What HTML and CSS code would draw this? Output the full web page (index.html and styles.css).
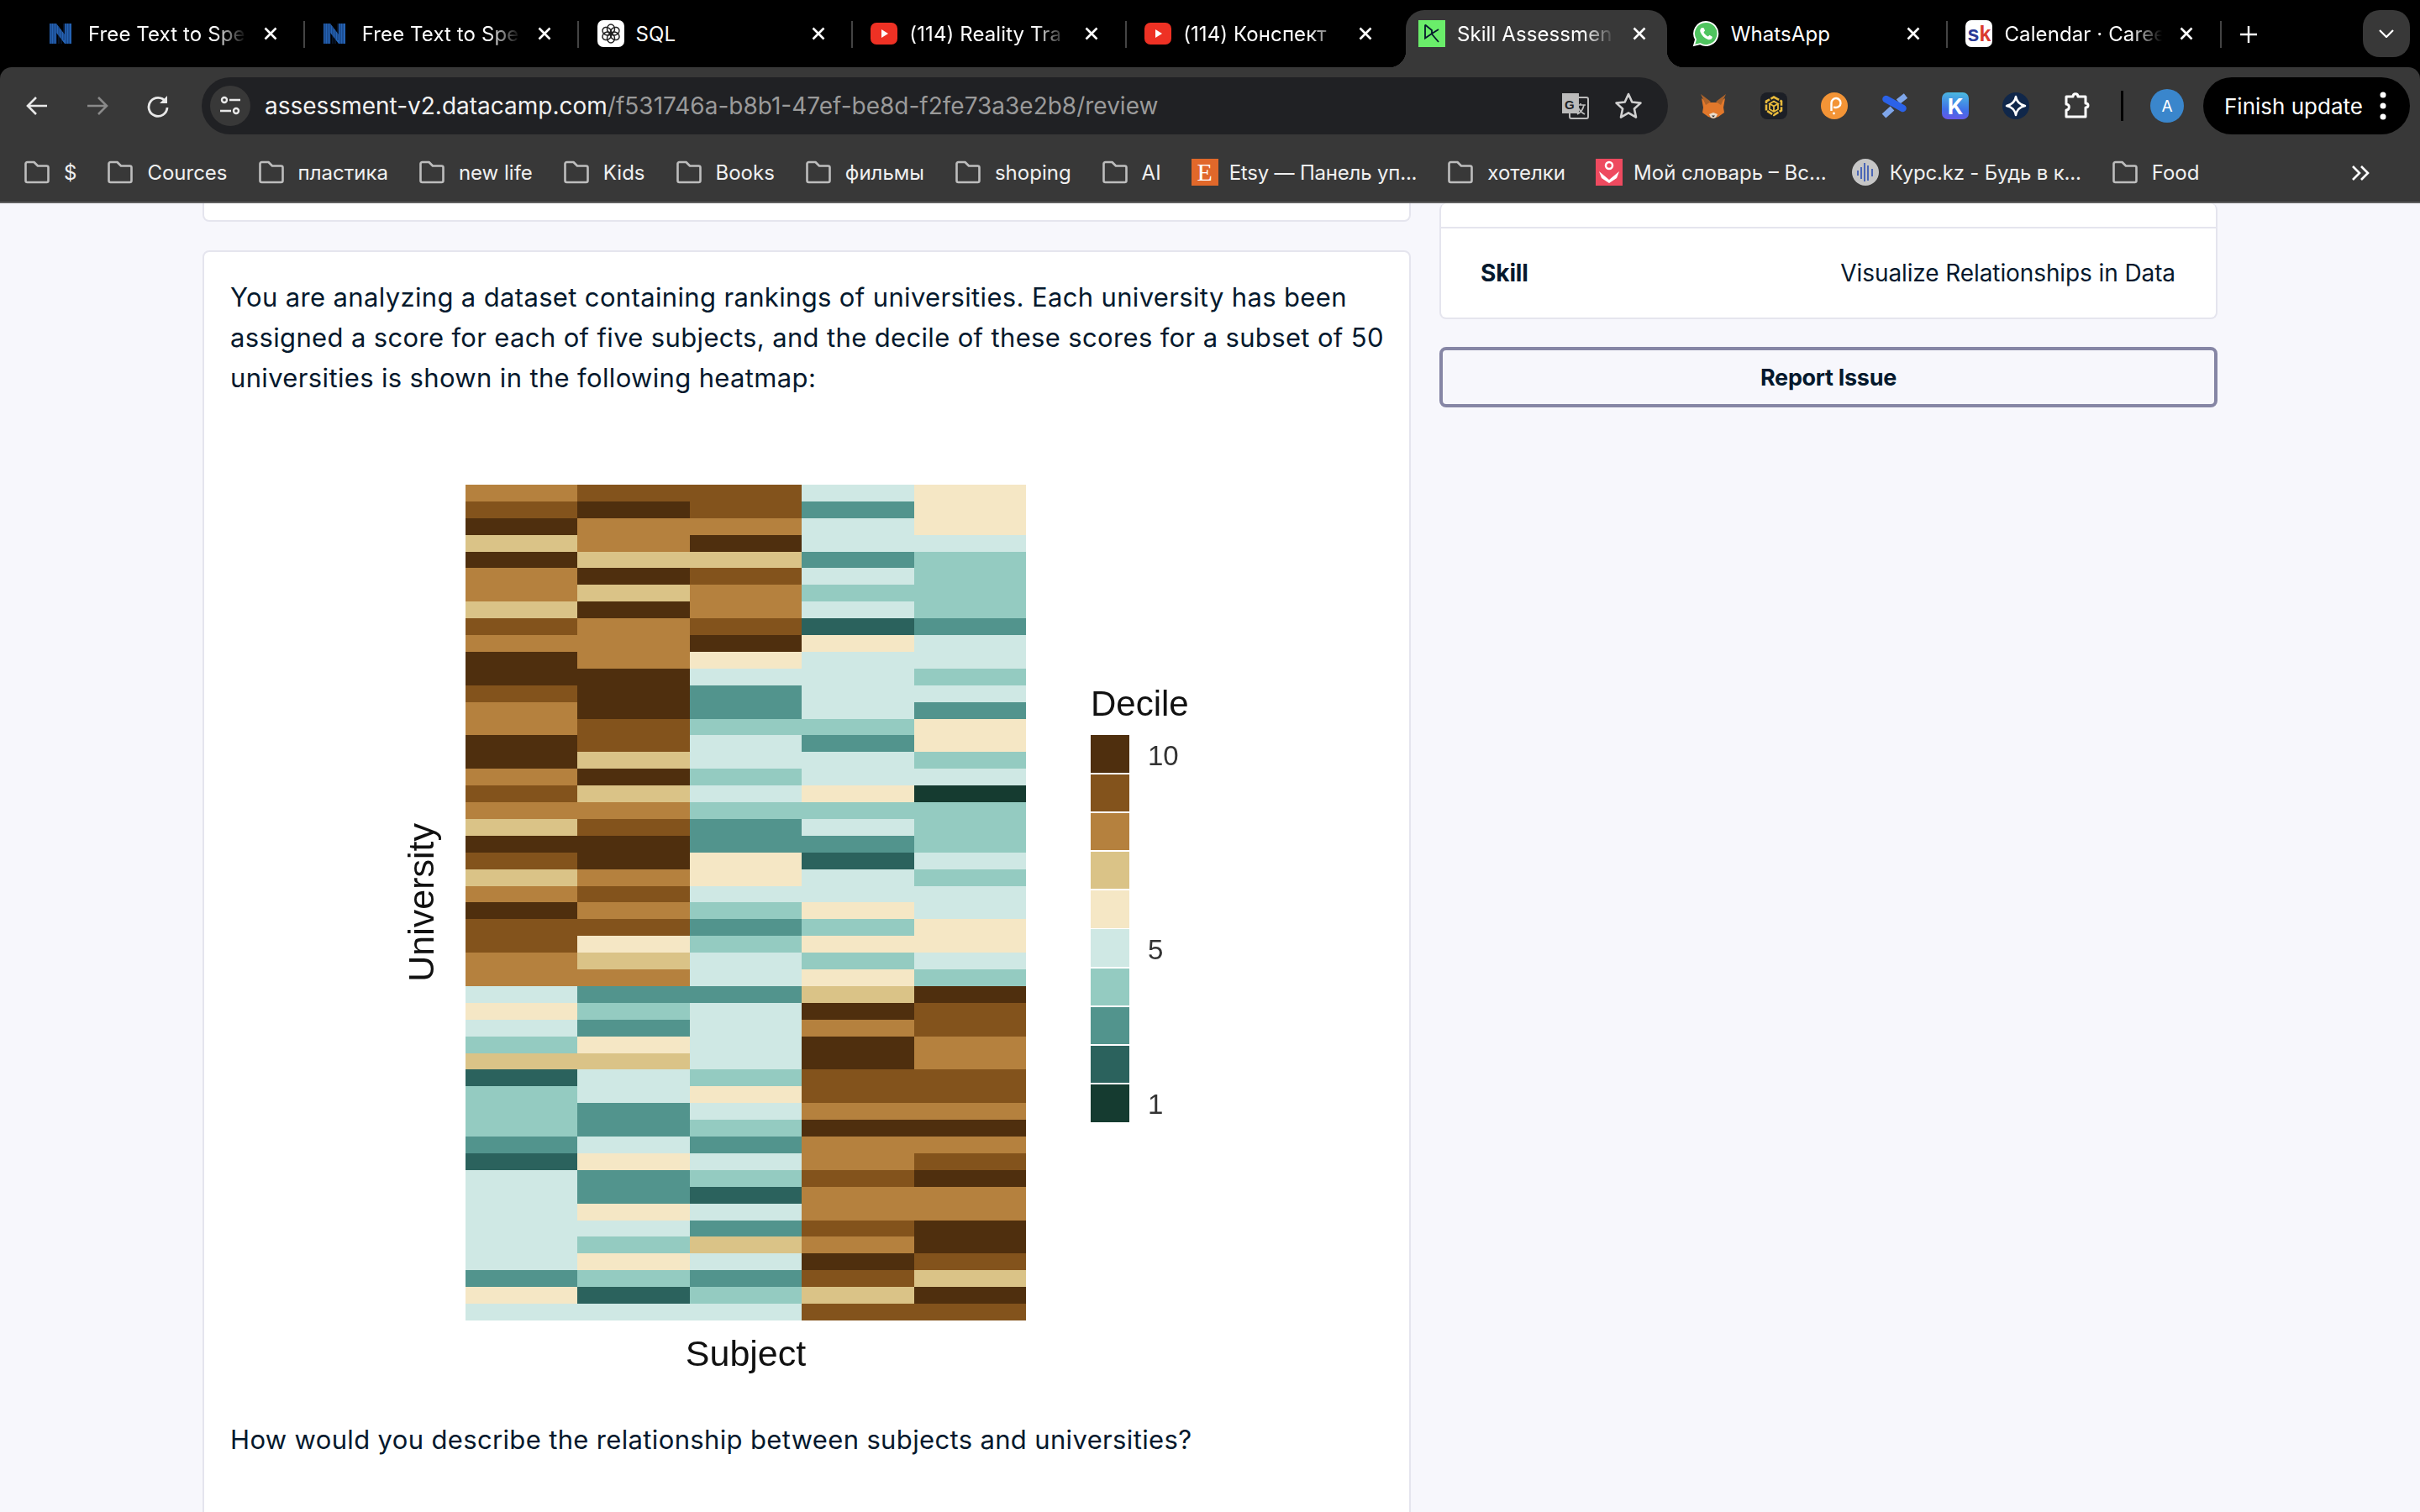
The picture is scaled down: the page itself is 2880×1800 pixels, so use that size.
FILE: index.html
```html
<!DOCTYPE html>
<html lang="en">

<head>
  <meta charset="UTF-8">
  <meta name="viewport" content="width=device-width, initial-scale=1.0">
  <title>Skill Assessment</title>
  <link rel="stylesheet" href="styles.css">
</head>

<body>
  <svg class="defs" width="0" height="0">
    <symbol id="folder" viewBox="0 0 32 28"><path d="M2.5 4a2 2 0 0 1 2-2h8l4.500 4.500h10.500a2 2 0 0 1 2 2v15.500a2 2 0 0 1-2 2h-23a2 2 0 0 1-2-2z" fill="none" stroke="#bdbdbd" stroke-width="2.600" stroke-linejoin="round"/></symbol>
    <symbol id="notion" viewBox="0 0 26 32"><path d="M0 4h8l10 13V4h8v24h-8L8 15v13H0z" fill="#2563b4"/><path d="M2 4v24M5 4v24M8 4v24M11 8v20M14 12v16M17 4v20M20 4v24M23 4v24" stroke="#0f2f5f" stroke-width="0.800"/></symbol>
    <symbol id="youtube" viewBox="0 0 32 32"><rect y="3" width="32" height="26" rx="7" fill="#ee3124"/><path d="M13 11l8 5-8 5z" fill="#fff"/></symbol>
    <symbol id="close" viewBox="0 0 16 16"><path d="M1.500 1.500l13 13M14.500 1.500l-13 13" stroke="#fff" stroke-width="2.600"/></symbol>
  </svg>

  <div class="chrome">
  <div class="tabstrip">
    <div class="tab">
      <svg class="favicon notion"><use href="#notion"/></svg>
      <span class="tab-title">Free Text to Spe</span><svg class="tab-close"><use href="#close"/></svg>
    </div>
    <span class="tab-sep"></span>
    <div class="tab">
      <svg class="favicon notion"><use href="#notion"/></svg>
      <span class="tab-title">Free Text to Spe</span><svg class="tab-close"><use href="#close"/></svg>
    </div>
    <span class="tab-sep"></span>
    <div class="tab">
      <svg class="favicon" viewBox="0 0 32 32"><rect width="32" height="32" rx="7" fill="#fff"/><g fill="none" stroke="#222" stroke-width="1.500"><ellipse cx="16" cy="10.500" rx="4.500" ry="5.500"/><ellipse cx="16" cy="10.500" rx="4.500" ry="5.500" transform="rotate(60 16 16)"/><ellipse cx="16" cy="10.500" rx="4.500" ry="5.500" transform="rotate(120 16 16)"/><ellipse cx="16" cy="10.500" rx="4.500" ry="5.500" transform="rotate(180 16 16)"/><ellipse cx="16" cy="10.500" rx="4.500" ry="5.500" transform="rotate(240 16 16)"/><ellipse cx="16" cy="10.500" rx="4.500" ry="5.500" transform="rotate(300 16 16)"/></g></svg>
      <span class="tab-title plain">SQL</span><svg class="tab-close"><use href="#close"/></svg>
    </div>
    <span class="tab-sep"></span>
    <div class="tab">
      <svg class="favicon"><use href="#youtube"/></svg>
      <span class="tab-title">(114) Reality Tra</span><svg class="tab-close"><use href="#close"/></svg>
    </div>
    <span class="tab-sep"></span>
    <div class="tab">
      <svg class="favicon"><use href="#youtube"/></svg>
      <span class="tab-title">(114) Конспект</span><svg class="tab-close"><use href="#close"/></svg>
    </div>
    <span class="tab-sep hidden"></span>
    <div class="tab active">
      <svg class="favicon" viewBox="0 0 32 32"><rect width="32" height="32" fill="#6aed6a"/><path d="M8 5.500v16l8-5.500 8-5M8 5.500l8 6.500v4.500l8 9.500" fill="none" stroke="#05192d" stroke-width="1.800"/></svg>
      <span class="tab-title">Skill Assessmen</span><svg class="tab-close"><use href="#close"/></svg>
    </div>
    <span class="tab-sep hidden"></span>
    <div class="tab">
      <svg class="favicon" viewBox="0 0 32 32"><path d="M16 2a14 14 0 0 0-12 21L2 30l7.300-1.900A14 14 0 1 0 16 2z" fill="#4fc45f" stroke="#fff" stroke-width="1.800"/><path d="M11.500 9c-2 1-2.800 3-1.800 5.500 1.800 4 4.700 6.900 8.800 8.600 2.500.7 4.500-.2 5.300-2.300l-.3-1.300-3-1.700-1.800 1.700c-2.300-1-4.200-2.900-5.200-5.200l1.600-1.800-1.500-3.200z" fill="#fff"/></svg>
      <span class="tab-title plain">WhatsApp</span><svg class="tab-close"><use href="#close"/></svg>
    </div>
    <span class="tab-sep"></span>
    <div class="tab">
      <span class="favicon sk"><b class="sk-s">s</b><b class="sk-k">k</b></span>
      <span class="tab-title">Calendar · Caree</span><svg class="tab-close"><use href="#close"/></svg>
    </div>
    <span class="tab-sep"></span>
    <svg class="new-tab" viewBox="0 0 22 22"><path d="M11 1v20M1 11h20" stroke="#fff" stroke-width="2.400"/></svg>
    <div class="tab-search"><svg viewBox="0 0 18 10" width="18" height="10"><path d="M1 1l8 8 8-8" fill="none" stroke="#fff" stroke-width="2.200"/></svg></div>
  </div>

  <div class="toolbar">
    <div class="nav-btns">
      <svg viewBox="0 0 28 28" width="28" height="28"><path d="M26 14H4M13 4L3 14l10 10" fill="none" stroke="#e8e8e8" stroke-width="2.600"/></svg>
      <svg viewBox="0 0 28 28" width="28" height="28"><path d="M2 14h22M15 4l10 10-10 10" fill="none" stroke="#8a8a8a" stroke-width="2.600"/></svg>
      <svg viewBox="0 0 28 28" width="28" height="28"><path d="M23 9a11 11 0 1 0 2 7" fill="none" stroke="#e8e8e8" stroke-width="2.800"/><path d="M25 2v9h-9z" fill="#e8e8e8"/></svg>
    </div>
    <div class="omnibox">
      <span class="site-info"><svg viewBox="0 0 26 26" width="26" height="26"><g fill="none" stroke="#e8e8e8" stroke-width="2.400"><circle cx="6" cy="6" r="3"/><path d="M12 6h13M1 19h13"/><circle cx="20" cy="19" r="3"/></g></svg></span>
      <span class="url">assessment-v2.datacamp.com<span class="url-path">/f531746a-b8b1-47ef-be8d-f2fe73a3e2b8/review</span></span>
      <svg class="omni-icon" viewBox="0 0 34 34" width="34" height="34"><rect x="11" y="7" width="22" height="25" rx="2" fill="none" stroke="#bbb" stroke-width="2"/><path d="M2 2h20v24H2z" fill="#bbb"/><text x="5" y="21" class="translate-g">G</text><path d="M19 16h11M24 14v2M28 16c-1 5-4 9-8 11M21 19c2 4 4 6 8 8" fill="none" stroke="#bbb" stroke-width="1.700"/></svg>
      <svg class="omni-icon" viewBox="0 0 34 34" width="34" height="34"><path d="M17 3l4.300 9.500 10.200 1.100-7.600 6.900 2.100 10.100L17 25.400l-9 5.200 2.100-10.100-7.600-6.900 10.200-1.100z" fill="none" stroke="#d0d0d0" stroke-width="2.600" stroke-linejoin="round"/></svg>
    </div>
    <div class="extensions">
      <svg class="ext" viewBox="0 0 32 32"><path d="M2 7l7 5h14l7-5-2 11 1 6-7 5-6 2-6-2-7-5 1-6z" fill="#e2782b"/><path d="M1 2l12 9-6 4zM31 2L19 11l6 4z" fill="#ad632a"/><path d="M11 26l5-2 5 2-2 4-3 1-3-1z" fill="#e9dccd"/><path d="M14 27.500h4l-2 2.200z" fill="#333"/></svg>
      <svg class="ext" viewBox="0 0 32 32"><rect width="32" height="32" rx="8" fill="#1c1f26"/><g fill="none" stroke="#e9bb3c"><path d="M16 5.500l9 5v11l-9 5.500-9-5.500v-11z" stroke-width="2.600" stroke-dasharray="7 1.500"/><path d="M11 13.500l5 3 5-3-5-3zM11 14v6l5 3 5-3v-6M16 17v6" stroke-width="1.800"/></g></svg>
      <svg class="ext" viewBox="0 0 32 32"><circle cx="16" cy="16" r="16" fill="#f39436"/><path d="M12.500 22V12.500a5.500 5.500 0 1 1 5 5.500l-2.500-.2" fill="none" stroke="#fff" stroke-width="2.400"/><circle cx="15.500" cy="25" r="1.400" fill="#fff"/></svg>
      <svg class="ext" viewBox="0 0 32 32"><path d="M3 28l10-9M20 11l9-7" stroke="#7fa6ea" stroke-width="7"/><path d="M5.500 8l20 11" stroke="#2b62e8" stroke-width="8.500" stroke-linecap="round"/></svg>
      <span class="ext ext-k">K</span>
      <svg class="ext" viewBox="0 0 32 32"><circle cx="16" cy="16" r="16" fill="#10274a"/><path d="M16 5c1 6 4 9.500 11 11-7 1.500-10 5-11 11-1-6-4-9.500-11-11 7-1.500 10-5 11-11z" fill="none" stroke="#fff" stroke-width="2.500" stroke-linejoin="round"/></svg>
      <svg class="ext" viewBox="0 0 32 32"><path d="M4 5h8c0-4.500 6-4.500 6 0h9v8c4 0 4 5 0 5v11H4v-8c4.500 0 4.500-7 0-7z" fill="none" stroke="#fff" stroke-width="3" stroke-linejoin="round"/></svg>
      <span class="toolbar-sep"></span>
      <span class="avatar">A</span>
    </div>
    <div class="finish-update">
      <span>Finish update</span>
      <svg viewBox="0 0 8 34" width="8" height="34"><circle cx="4" cy="4" r="3.500" fill="#fff"/><circle cx="4" cy="17" r="3.500" fill="#fff"/><circle cx="4" cy="30" r="3.500" fill="#fff"/></svg>
    </div>
  </div>

  <div class="bookmarks">
    <a class="bm"><svg class="bm-icon"><use href="#folder"/></svg>$</a>
    <a class="bm"><svg class="bm-icon"><use href="#folder"/></svg>Cources</a>
    <a class="bm"><svg class="bm-icon"><use href="#folder"/></svg>пластика</a>
    <a class="bm"><svg class="bm-icon"><use href="#folder"/></svg>new life</a>
    <a class="bm"><svg class="bm-icon"><use href="#folder"/></svg>Kids</a>
    <a class="bm"><svg class="bm-icon"><use href="#folder"/></svg>Books</a>
    <a class="bm"><svg class="bm-icon"><use href="#folder"/></svg>фильмы</a>
    <a class="bm"><svg class="bm-icon"><use href="#folder"/></svg>shoping</a>
    <a class="bm"><svg class="bm-icon"><use href="#folder"/></svg>AI</a>
    <a class="bm bm-site tight"><span class="bm-icon etsy">E</span>Etsy — Панель уп...</a>
    <a class="bm"><svg class="bm-icon"><use href="#folder"/></svg>хотелки</a>
    <a class="bm bm-site"><svg class="bm-icon" viewBox="0 0 32 32"><rect width="32" height="32" fill="#ee4a5f"/><circle cx="16" cy="8" r="4" fill="none" stroke="#fff" stroke-width="2.500"/><path d="M4 15l12 10 12-10-3 8-9 6-9-6z" fill="#fff"/></svg>Мой словарь – Вс...</a>
    <a class="bm bm-site tight pull"><svg class="bm-icon" viewBox="0 0 32 32"><circle cx="16" cy="16" r="16" fill="#c6c6c6"/><path d="M7 14v6M11 10v14M15 5v22M19 8v18M24 12v9" stroke="#3f5db5" stroke-width="1.800"/></svg>Курс.kz - Будь в к...</a>
    <a class="bm"><svg class="bm-icon"><use href="#folder"/></svg>Food</a>
    <svg class="bm-more" viewBox="0 0 22 20" width="22" height="20"><path d="M2 2l8 8-8 8M12 2l8 8-8 8" fill="none" stroke="#fff" stroke-width="2.600"/></svg>
  </div>
  </div>

  <main class="page">
    <section class="left-col">
      <div class="card card-stub"></div>
      <div class="card question">
        <p>You are analyzing a dataset containing rankings of universities. Each university has been assigned a score for each of five subjects, and the decile of these scores for a subset of 50 universities is shown in the following heatmap:</p>
        <div class="chart">
          <div class="y-label">University</div>
          <div class="heatmap">
            <i class="d8"></i><i class="d9"></i><i class="d9"></i><i class="d5"></i><i class="d6"></i>
            <i class="d9"></i><i class="d10"></i><i class="d9"></i><i class="d3"></i><i class="d6"></i>
            <i class="d10"></i><i class="d8"></i><i class="d8"></i><i class="d5"></i><i class="d6"></i>
            <i class="d7"></i><i class="d8"></i><i class="d10"></i><i class="d5"></i><i class="d5"></i>
            <i class="d10"></i><i class="d7"></i><i class="d7"></i><i class="d3"></i><i class="d4"></i>
            <i class="d8"></i><i class="d10"></i><i class="d9"></i><i class="d5"></i><i class="d4"></i>
            <i class="d8"></i><i class="d7"></i><i class="d8"></i><i class="d4"></i><i class="d4"></i>
            <i class="d7"></i><i class="d10"></i><i class="d8"></i><i class="d5"></i><i class="d4"></i>
            <i class="d9"></i><i class="d8"></i><i class="d9"></i><i class="d2"></i><i class="d3"></i>
            <i class="d8"></i><i class="d8"></i><i class="d10"></i><i class="d6"></i><i class="d5"></i>
            <i class="d10"></i><i class="d8"></i><i class="d6"></i><i class="d5"></i><i class="d5"></i>
            <i class="d10"></i><i class="d10"></i><i class="d5"></i><i class="d5"></i><i class="d4"></i>
            <i class="d9"></i><i class="d10"></i><i class="d3"></i><i class="d5"></i><i class="d5"></i>
            <i class="d8"></i><i class="d10"></i><i class="d3"></i><i class="d5"></i><i class="d3"></i>
            <i class="d8"></i><i class="d9"></i><i class="d4"></i><i class="d4"></i><i class="d6"></i>
            <i class="d10"></i><i class="d9"></i><i class="d5"></i><i class="d3"></i><i class="d6"></i>
            <i class="d10"></i><i class="d7"></i><i class="d5"></i><i class="d5"></i><i class="d4"></i>
            <i class="d8"></i><i class="d10"></i><i class="d4"></i><i class="d5"></i><i class="d5"></i>
            <i class="d9"></i><i class="d7"></i><i class="d5"></i><i class="d6"></i><i class="d1"></i>
            <i class="d8"></i><i class="d8"></i><i class="d4"></i><i class="d4"></i><i class="d4"></i>
            <i class="d7"></i><i class="d9"></i><i class="d3"></i><i class="d5"></i><i class="d4"></i>
            <i class="d10"></i><i class="d10"></i><i class="d3"></i><i class="d3"></i><i class="d4"></i>
            <i class="d9"></i><i class="d10"></i><i class="d6"></i><i class="d2"></i><i class="d5"></i>
            <i class="d7"></i><i class="d8"></i><i class="d6"></i><i class="d5"></i><i class="d4"></i>
            <i class="d8"></i><i class="d9"></i><i class="d5"></i><i class="d5"></i><i class="d5"></i>
            <i class="d10"></i><i class="d8"></i><i class="d4"></i><i class="d6"></i><i class="d5"></i>
            <i class="d9"></i><i class="d9"></i><i class="d3"></i><i class="d4"></i><i class="d6"></i>
            <i class="d9"></i><i class="d6"></i><i class="d4"></i><i class="d6"></i><i class="d6"></i>
            <i class="d8"></i><i class="d7"></i><i class="d5"></i><i class="d4"></i><i class="d5"></i>
            <i class="d8"></i><i class="d8"></i><i class="d5"></i><i class="d6"></i><i class="d4"></i>
            <i class="d5"></i><i class="d3"></i><i class="d3"></i><i class="d7"></i><i class="d10"></i>
            <i class="d6"></i><i class="d4"></i><i class="d5"></i><i class="d10"></i><i class="d9"></i>
            <i class="d5"></i><i class="d3"></i><i class="d5"></i><i class="d8"></i><i class="d9"></i>
            <i class="d4"></i><i class="d6"></i><i class="d5"></i><i class="d10"></i><i class="d8"></i>
            <i class="d7"></i><i class="d7"></i><i class="d5"></i><i class="d10"></i><i class="d8"></i>
            <i class="d2"></i><i class="d5"></i><i class="d4"></i><i class="d9"></i><i class="d9"></i>
            <i class="d4"></i><i class="d5"></i><i class="d6"></i><i class="d9"></i><i class="d9"></i>
            <i class="d4"></i><i class="d3"></i><i class="d5"></i><i class="d8"></i><i class="d8"></i>
            <i class="d4"></i><i class="d3"></i><i class="d4"></i><i class="d10"></i><i class="d10"></i>
            <i class="d3"></i><i class="d5"></i><i class="d3"></i><i class="d8"></i><i class="d8"></i>
            <i class="d2"></i><i class="d6"></i><i class="d5"></i><i class="d8"></i><i class="d9"></i>
            <i class="d5"></i><i class="d3"></i><i class="d4"></i><i class="d9"></i><i class="d10"></i>
            <i class="d5"></i><i class="d3"></i><i class="d2"></i><i class="d8"></i><i class="d8"></i>
            <i class="d5"></i><i class="d6"></i><i class="d5"></i><i class="d8"></i><i class="d8"></i>
            <i class="d5"></i><i class="d5"></i><i class="d3"></i><i class="d9"></i><i class="d10"></i>
            <i class="d5"></i><i class="d4"></i><i class="d7"></i><i class="d8"></i><i class="d10"></i>
            <i class="d5"></i><i class="d6"></i><i class="d5"></i><i class="d10"></i><i class="d9"></i>
            <i class="d3"></i><i class="d4"></i><i class="d3"></i><i class="d9"></i><i class="d7"></i>
            <i class="d6"></i><i class="d2"></i><i class="d4"></i><i class="d7"></i><i class="d10"></i>
            <i class="d5"></i><i class="d5"></i><i class="d5"></i><i class="d9"></i><i class="d9"></i>
          </div>
          <div class="legend">
            <div class="legend-title">Decile</div>
            <div class="legend-row"><i class="d10"></i><span>10</span></div>
            <div class="legend-row"><i class="d9"></i></div>
            <div class="legend-row"><i class="d8"></i></div>
            <div class="legend-row"><i class="d7"></i></div>
            <div class="legend-row"><i class="d6"></i></div>
            <div class="legend-row"><i class="d5"></i><span>5</span></div>
            <div class="legend-row"><i class="d4"></i></div>
            <div class="legend-row"><i class="d3"></i></div>
            <div class="legend-row"><i class="d2"></i></div>
            <div class="legend-row"><i class="d1"></i><span>1</span></div>
          </div>
          <div class="x-label">Subject</div>
        </div>
        <p class="prompt">How would you describe the relationship between subjects and universities?</p>
      </div>
    </section>

    <aside class="right-col">
      <div class="card meta">
        <div class="meta-stub"></div>
        <div class="meta-row"><strong>Skill</strong><span>Visualize Relationships in Data</span></div>
      </div>
      <button class="report">Report Issue</button>
    </aside>
  </main>
</body>

</html>
```

FILE: styles.css
```css
* {
  box-sizing: border-box;
}

html,
body {
  margin: 0;
  height: 1800px;
  overflow: hidden;
}

body {
  font-family: 'Inter', sans-serif;
  background-color: #f7f7fc;
  color: #05192d;
}

.defs {
  position: absolute;
}

/* browser chrome */
.chrome {
  background-color: #000;
}

.tabstrip {
  display: flex;
  align-items: flex-end;
  height: 80px;
  padding-left: 44px;
}

.tab {
  position: relative;
  display: flex;
  align-items: center;
  width: 311px;
  height: 68px;
  padding: 0 15px 12px 15px;
  color: #fff;
  font-size: 24px;
  letter-spacing: 0.100px;
  border-radius: 22px 22px 0 0;
}

.tab.active {
  background-color: #383838;
}

.tab.active::before,
.tab.active::after {
  content: "";
  position: absolute;
  bottom: 0;
  width: 20px;
  height: 20px;
}

.tab.active::before {
  left: -20px;
  background: radial-gradient(circle at 0 0, transparent 20px, #383838 20.500px);
}

.tab.active::after {
  right: -20px;
  background: radial-gradient(circle at 100% 0, transparent 20px, #383838 20.500px);
}

.tab-sep {
  width: 2px;
  height: 32px;
  margin: 0 6.400px 23px 6.400px;
  background-color: #444;
}

.tab-sep.hidden {
  background-color: transparent;
}

.favicon {
  flex: none;
  width: 32px;
  height: 32px;
}

.favicon.notion {
  width: 26px;
  margin-right: 6px;
}

.sk {
  display: flex;
  align-items: center;
  justify-content: center;
  background-color: #fff;
  border-radius: 7px;
  font-family: 'Liberation Sans', sans-serif;
  font-size: 25px;
}

.sk-s {
  color: #2a3a96;
}

.sk-k {
  color: #d93a30;
}

.tab-title {
  flex: none;
  width: 192px;
  margin-left: 14px;
  overflow: hidden;
  white-space: nowrap;
  -webkit-mask-image: linear-gradient(to right, #000 78%, transparent 98%);
  mask-image: linear-gradient(to right, #000 78%, transparent 98%);
}

.tab-title.plain {
  -webkit-mask-image: none;
  mask-image: none;
}

.tab-close {
  flex: none;
  width: 16px;
  height: 16px;
  margin-left: 17px;
}

.new-tab {
  width: 22px;
  height: 22px;
  margin: 0 0 28px 15px;
}

.tab-search {
  display: flex;
  align-items: center;
  justify-content: center;
  width: 56px;
  height: 56px;
  margin: 0 0 12px 125px;
  background-color: #383838;
  border-radius: 20px;
}

.toolbar {
  display: flex;
  align-items: center;
  height: 80px;
  padding: 12px 0 0 0;
  background-color: #383838;
  border-radius: 14px 14px 0 0;
}

.nav-btns {
  flex: none;
  display: flex;
  align-items: center;
  gap: 44px;
  padding-left: 30px;
  width: 240px;
}

.omnibox {
  flex: none;
  display: flex;
  align-items: center;
  width: 1745px;
  height: 68px;
  padding: 0 30px 0 10px;
  background-color: #202124;
  border-radius: 34px;
}

.site-info {
  display: flex;
  align-items: center;
  justify-content: center;
  width: 48px;
  height: 48px;
  background-color: #383838;
  border-radius: 50%;
}

.url {
  flex: 1;
  margin-left: 17px;
  color: #f2f2f2;
  font-size: 28px;
  white-space: nowrap;
}

.url-path {
  color: #9a9a9a;
}

.translate-g {
  font-family: 'Liberation Sans', sans-serif;
  font-size: 15px;
  font-weight: 700;
  fill: #202124;
}

.omni-icon {
  margin-left: 30px;
}

.extensions {
  flex: none;
  display: flex;
  align-items: center;
  gap: 40px;
  width: 637px;
  padding-left: 38px;
}

.ext {
  flex: none;
  display: flex;
  align-items: center;
  justify-content: center;
  width: 32px;
  height: 32px;
  color: #fff;
  font-weight: 700;
  font-size: 26px;
}

.ext-k {
  background: linear-gradient(185deg, #4bbde0, #3f6fe8 65%, #6a55e8);
  border-radius: 7px;
}

.toolbar-sep {
  flex: none;
  width: 3px;
  height: 36px;
  margin-left: -3.500px;
  background-color: #000;
}

.avatar {
  flex: none;
  display: flex;
  align-items: center;
  justify-content: center;
  width: 40px;
  height: 40px;
  margin-left: -7.500px;
  color: #fff;
  font-size: 19px;
  background-color: #3a86cc;
  border-radius: 50%;
}

.finish-update {
  flex: none;
  display: flex;
  align-items: center;
  justify-content: space-between;
  width: 246px;
  height: 68px;
  padding: 0 28px 0 25px;
  color: #fff;
  font-size: 26px;
  background-color: #000;
  border-radius: 34px;
}

.bookmarks {
  position: relative;
  display: flex;
  align-items: center;
  height: 82px;
  padding: 10px 0 0 28px;
  gap: 36px;
  background-color: #383838;
  border-bottom: 2px solid #5e5e5e;
  color: #f0f0f0;
  font-size: 24px;
}

.bm {
  display: flex;
  align-items: center;
  gap: 16px;
  white-space: nowrap;
}

.bm-site {
  gap: 13px;
}

.bm-site.tight {
  letter-spacing: -0.200px;
}

.bm-site.pull {
  margin-left: -6px;
}

.bm-icon {
  flex: none;
  width: 32px;
  height: 32px;
}

.etsy {
  display: flex;
  align-items: center;
  justify-content: center;
  color: #fff;
  font-family: 'Liberation Serif', serif;
  font-size: 30px;
  background-color: #e1682a;
}

.bm-more {
  position: absolute;
  top: 36px;
  left: 2798px;
}

/* page */
.page {
  display: grid;
  grid-template-columns: 1438px 926px;
  column-gap: 34px;
  align-items: start;
  padding-left: 241px;
}

.card {
  background-color: #fff;
  border: 2px solid #e5e5ee;
  border-radius: 8px;
}

.card-stub {
  height: 22px;
  margin-bottom: 34px;
  border-top: 0;
  border-radius: 0 0 8px 8px;
}

.question {
  height: 1600px;
  padding: 30px 20px 30px 31px;
  color: #05192d;
  font-size: 31px;
  line-height: 48px;
  letter-spacing: 0.350px;
}

.question p {
  margin: 0;
}

.chart {
  display: grid;
  grid-template-columns: 48px 667px auto;
  column-gap: 29px;
  align-items: center;
  margin: 103px 0 0 203px;
  color: #111;
  font-family: 'Liberation Sans', sans-serif;
  font-size: 43px;
  line-height: 1;
  letter-spacing: 0;
  filter: blur(0.4px);
}

.y-label {
  justify-self: center;
  writing-mode: vertical-rl;
  transform: rotate(180deg);
}

.heatmap {
  display: grid;
  grid-template-columns: repeat(5, 1fr);
  grid-template-rows: repeat(50, 1fr);
  width: 667px;
  height: 995px;
}

.legend {
  margin: 4px 0 0 48px;
}

.legend-title {
  margin-bottom: 16px;
  font-size: 42px;
}

.legend-row {
  display: flex;
  align-items: center;
  height: 46.200px;
  color: #333;
  font-size: 33px;
}

.legend-row i {
  width: 46px;
  height: 44.500px;
  margin-right: 22px;
}

.legend-row span {
  padding-top: 3px;
}

.x-label {
  grid-column: 2;
  justify-self: center;
  margin-top: 18px;
}

.prompt {
  margin-top: 57px !important;
}

.d1 { background-color: #153b30; }
.d2 { background-color: #2b625d; }
.d3 { background-color: #52948d; }
.d4 { background-color: #94cbc1; }
.d5 { background-color: #cfe8e4; }
.d6 { background-color: #f5e7c5; }
.d7 { background-color: #dac387; }
.d8 { background-color: #b5813e; }
.d9 { background-color: #83531c; }
.d10 { background-color: #4f2f0e; }

.meta {
  border-top: 0;
}

.meta-stub {
  height: 30px;
  border-bottom: 2px solid #e5e5ee;
}

.meta-row {
  display: flex;
  align-items: center;
  justify-content: space-between;
  height: 106px;
  padding: 0 48px 0 47px;
  font-size: 28px;
  letter-spacing: -0.100px;
}

.report {
  display: block;
  width: 100%;
  height: 72px;
  margin-top: 33px;
  color: #05192d;
  font-family: inherit;
  font-size: 27px;
  font-weight: 700;
  letter-spacing: -0.300px;
  background-color: transparent;
  border: 4px solid #8686a5;
  border-radius: 8px;
}
```
